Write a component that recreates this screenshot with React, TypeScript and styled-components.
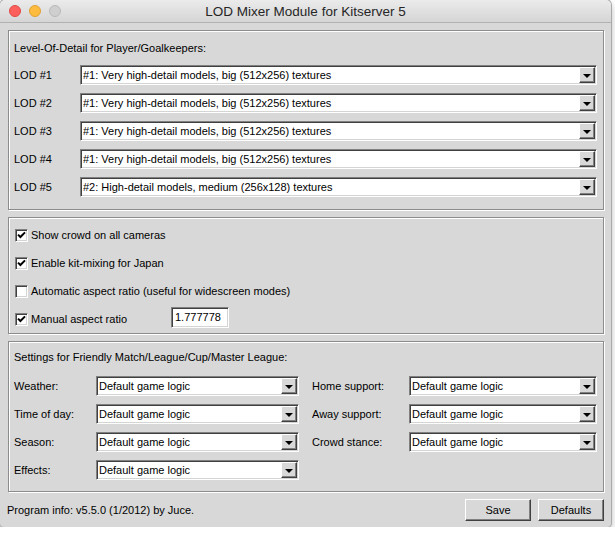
import React from "react";
import styled, { createGlobalStyle } from "styled-components";

const GlobalStyle = createGlobalStyle`
  html, body {
    margin: 0;
    padding: 0;
    background: #ffffff;
  }
  body {
    font-family: "Liberation Sans", Arial, sans-serif;
    font-size: 11px;
    color: #000;
  }
`;

const HIGH = "#1: Very high-detail models, big (512x256) textures";
const MEDIUM = "#2: High-detail models, medium (256x128) textures";
const DEFAULT = "Default game logic";

const lods = [HIGH, HIGH, HIGH, HIGH, MEDIUM];

const checks = [
  { label: "Show crowd on all cameras", checked: true },
  { label: "Enable kit-mixing for Japan", checked: true },
  { label: "Automatic aspect ratio (useful for widescreen modes)", checked: false },
];

const settings = [
  ["Weather:", "Home support:"],
  ["Time of day:", "Away support:"],
  ["Season:", "Crowd stance:"],
  ["Effects:", null],
];

const Dropdown: React.FC<{ value: string }> = ({ value }) => (
  <Select>
    <SelectText>{value}</SelectText>
    <ArrowButton>
      <Arrow />
    </ArrowButton>
  </Select>
);

const CheckBox: React.FC<{ checked: boolean }> = ({ checked }) => (
  <Box>
    {checked && (
      <svg width="9" height="9" viewBox="0 0 9 9">
        <path d="M1 3.6 L3.4 6 L8 1.4" fill="none" stroke="#000" strokeWidth="2" />
      </svg>
    )}
  </Box>
);

const App: React.FC = () => {
  return (
    <>
      <GlobalStyle />
      <Window>
        <TitleBar>
          <Lights>
            <Light $color="#fc605c" $edge="#de4a44" />
            <Light $color="#fdbc40" $edge="#dea034" />
            <Light $color="#cfcfcf" $edge="#b9b9b9" />
          </Lights>
          <Title>LOD Mixer Module for Kitserver 5</Title>
          <span />
        </TitleBar>

        <Content>
          <GroupBox $pt={10} $pb={12}>
            <GroupTitle>Level-Of-Detail for Player/Goalkeepers:</GroupTitle>
            <Rows>
              {lods.map((value, i) => (
                <LodRow key={i}>
                  <RowLabel>LOD #{i + 1}</RowLabel>
                  <Dropdown value={value} />
                </LodRow>
              ))}
            </Rows>
          </GroupBox>

          <GroupBox $pt={7} $pb={4}>
            <Rows>
              {checks.map((c) => (
                <CheckRow key={c.label}>
                  <CheckBox checked={c.checked} />
                  <CheckLabel>{c.label}</CheckLabel>
                </CheckRow>
              ))}
              <CheckRow>
                <CheckBox checked />
                <CheckLabel $width={140}>Manual aspect ratio</CheckLabel>
                <NumberField>1.777778</NumberField>
              </CheckRow>
            </Rows>
          </GroupBox>

          <GroupBox $pt={8} $pb={11}>
            <GroupTitle $mb={12}>Settings for Friendly Match/League/Cup/Master League:</GroupTitle>
            <SettingsGrid>
              {settings.map(([left, right]) => (
                <React.Fragment key={left}>
                  <RowLabel>{left}</RowLabel>
                  <Dropdown value={DEFAULT} />
                  {right ? (
                    <>
                      <RowLabel $indent={13}>{right}</RowLabel>
                      <Dropdown value={DEFAULT} />
                    </>
                  ) : null}
                </React.Fragment>
              ))}
            </SettingsGrid>
          </GroupBox>

          <Footer>
            <InfoText>Program info: v5.5.0 (1/2012) by Juce.</InfoText>
            <ButtonBar>
              <PushButton>Save</PushButton>
              <PushButton>Defaults</PushButton>
            </ButtonBar>
          </Footer>
        </Content>
      </Window>
    </>
  );
};

export default App;

const Window = styled.div`
  width: 611px;
  height: 527px;
  background: #d8d8d8;
  border-radius: 5px 5px 4px 4px;
  box-shadow: 0 0 0 1px #a9a9a9, 0 4px 9px rgba(0, 0, 0, 0.3);
  display: flex;
  flex-direction: column;
  overflow: hidden;
`;

const TitleBar = styled.div`
  height: 22px;
  display: grid;
  grid-template-columns: 1fr auto 1fr;
  align-items: center;
  background: linear-gradient(#ebebeb, #d5d5d5);
  border-bottom: 1px solid #b1b1b1;
`;

const Lights = styled.div`
  display: flex;
  gap: 8px;
  padding-left: 9px;
`;

const Light = styled.span<{ $color: string; $edge: string }>`
  width: 12px;
  height: 12px;
  border-radius: 50%;
  box-sizing: border-box;
  background: ${(p) => p.$color};
  border: 1px solid ${(p) => p.$edge};
`;

const Title = styled.div`
  font-family: "Liberation Sans", Arial, sans-serif;
  font-size: 13.5px;
  color: #262626;
`;

const Content = styled.div`
  flex: 1;
  display: flex;
  flex-direction: column;
  gap: 7px;
  padding: 7px 7px 0 8px;
`;

const GroupBox = styled.div<{ $pt: number; $pb: number }>`
  border: 1px solid #8c8c8c;
  box-shadow: inset 1px 1px #ffffff, 1px 1px #ffffff;
  padding: ${(p) => p.$pt}px 6px ${(p) => p.$pb}px 5px;
`;

const GroupTitle = styled.div<{ $mb?: number }>`
  line-height: 14px;
  margin-bottom: ${(p) => p.$mb ?? 10}px;
`;

const Rows = styled.div`
  display: flex;
  flex-direction: column;
  gap: 8px;
`;

const LodRow = styled.div`
  display: grid;
  grid-template-columns: 66px 1fr;
  align-items: center;
  height: 20px;
`;

const RowLabel = styled.span<{ $indent?: number }>`
  padding-left: ${(p) => p.$indent ?? 0}px;
  white-space: nowrap;
`;

const Select = styled.div`
  height: 20px;
  box-sizing: border-box;
  display: flex;
  align-items: center;
  background: #ffffff;
  border-style: solid;
  border-width: 1px;
  border-color: #808080 #ffffff #ffffff #808080;
  box-shadow: inset 1px 1px #404040, inset -1px -1px #d4d4d4;
  padding: 1px 1px 1px 2px;
`;

const SelectText = styled.span`
  flex: 1;
  white-space: nowrap;
  overflow: hidden;
`;

const ArrowButton = styled.span`
  width: 16px;
  height: 16px;
  box-sizing: border-box;
  display: flex;
  align-items: center;
  justify-content: center;
  background: #d8d8d8;
  border-style: solid;
  border-width: 1px;
  border-color: #ffffff #404040 #404040 #ffffff;
  box-shadow: inset -1px -1px #808080;
`;

const Arrow = styled.span`
  width: 0;
  height: 0;
  border-left: 4px solid transparent;
  border-right: 4px solid transparent;
  border-top: 4px solid #000;
  margin-top: 1px;
`;

const CheckRow = styled.div`
  display: flex;
  align-items: center;
  height: 20px;
  padding-left: 1px;
`;

const Box = styled.span`
  width: 13px;
  height: 13px;
  box-sizing: border-box;
  display: flex;
  align-items: center;
  justify-content: center;
  background: #ffffff;
  border-style: solid;
  border-width: 1px;
  border-color: #808080 #ffffff #ffffff #808080;
  box-shadow: inset 1px 1px #404040, inset -1px -1px #d4d4d4;
`;

const CheckLabel = styled.span<{ $width?: number }>`
  margin-left: 3px;
  white-space: nowrap;
  width: ${(p) => (p.$width ? `${p.$width}px` : "auto")};
`;

const NumberField = styled.span`
  width: 58px;
  height: 21px;
  box-sizing: border-box;
  display: flex;
  align-items: center;
  padding-left: 3px;
  background: #ffffff;
  border-style: solid;
  border-width: 1px;
  border-color: #808080 #ffffff #ffffff #808080;
  box-shadow: inset 1px 1px #404040, inset -1px -1px #d4d4d4;
  margin-top: -4px;
`;

const SettingsGrid = styled.div`
  display: grid;
  grid-template-columns: 82px 203px 110px 188px;
  grid-auto-rows: 20px;
  row-gap: 8px;
  align-items: center;
`;

const Footer = styled.div`
  display: flex;
  align-items: center;
  justify-content: space-between;
  height: 22px;
  padding-right: 0;
`;

const InfoText = styled.span`
  margin-left: -1px;
`;

const ButtonBar = styled.div`
  display: flex;
  gap: 7px;
`;

const PushButton = styled.button`
  width: 66px;
  height: 22px;
  font-family: "Liberation Sans", Arial, sans-serif;
  font-size: 11px;
  color: #000;
  background: #d8d8d8;
  border-style: solid;
  border-width: 1px;
  border-color: #ffffff #404040 #404040 #ffffff;
  box-shadow: inset -1px -1px #808080;
  padding: 0;
`;
